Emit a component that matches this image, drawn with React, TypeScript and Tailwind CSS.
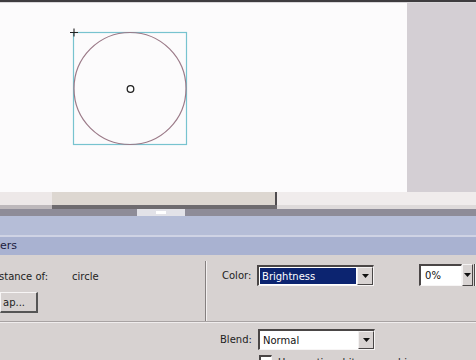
import React from "react";

const font = { fontFamily: '"DejaVu Sans", "Liberation Sans", sans-serif' };

function Arrow({ w = 16 }: { w?: number }) {
  return (
    <div
      className="flex h-full items-center justify-center border-l border-t border-l-[#f4f2f2] border-t-[#f4f2f2] border-r border-b border-r-[#4a4747] border-b-[#4a4747] bg-[#d8d3d2]"
      style={{ width: w }}
    >
      <svg width="7" height="4" viewBox="0 0 7 4">
        <path d="M0 0 L7 0 L3.5 4 Z" fill="#111" />
      </svg>
    </div>
  );
}

function Select({ children, highlight }: { children: React.ReactNode; highlight?: boolean }) {
  return (
    <div className="flex h-[21px] w-[117px] border-t-2 border-l-2 border-t-[#4a4646] border-l-[#4a4646] border-b border-r border-b-[#f7f5f5] border-r-[#f7f5f5] bg-white">
      <div className="flex flex-1 items-center p-[1px]">
        <div
          className={
            highlight
              ? "flex h-full w-full items-center bg-[#0c2470] pl-[2px] text-[10px] text-white"
              : "flex h-full w-full items-center pl-[2px] text-[10px] text-[#111]"
          }
        >
          {children}
        </div>
      </div>
      <Arrow />
    </div>
  );
}

export default function App() {
  return (
    <div className="h-[360px] w-[476px] overflow-hidden bg-[#d7d2d1]" style={font}>
      {/* top dark edge */}
      <div className="h-[2px] bg-[#3e3c3f]" />
      <div className="h-[1px] bg-[#d9d7da]" />
      {/* stage */}
      <div className="flex h-[189px]">
        <div className="w-[407px] bg-[#fcfbfc]">
          <svg width="407" height="189" viewBox="0 3 407 189">
            <rect x="73.5" y="32.5" width="113" height="112" fill="none" stroke="#77c3cf" strokeWidth="1.2" />
            <circle cx="130" cy="88.5" r="56" fill="none" stroke="#9b7a88" strokeWidth="1.2" />
            <circle cx="130.5" cy="89" r="3.3" fill="#fff" stroke="#222" strokeWidth="1.3" />
            <path d="M70 32.5 H78 M74 28.5 V36.5" stroke="#222" strokeWidth="1.1" />
          </svg>
        </div>
        <div className="flex-1 bg-[#d4cfd4]" />
      </div>
      {/* horizontal scrollbar area */}
      <div className="flex h-[13px]">
        <div className="w-[52px] bg-[#ede8e8]" />
        <div className="w-[223px] bg-[#ddd7d1]" />
        <div className="w-[2px] bg-[#4f4c4f]" />
        <div className="flex-1 bg-[#f0ecec]" />
      </div>
      <div className="flex h-[4px]">
        <div className="w-[52px] bg-[#bdb8bb]" />
        <div className="w-[225px] bg-[#6e6b6f]" />
        <div className="flex-1 bg-[#dedada]" />
      </div>
      <div className="flex h-[7px] bg-[#8e8c98]">
        <div className="w-[137px]" />
        <div className="flex w-[48px] items-center justify-center bg-[#e2e2e8]">
          <div className="h-[3px] w-[10px] bg-white" />
        </div>
      </div>
      {/* panel header bands */}
      <div className="h-[19px] bg-[#b5bdd7]" />
      <div className="h-[2px] bg-[#cfd3e4]" />
      <div className="flex h-[18px] items-center bg-[#a9b2d1]">
        <span className="text-[11px] text-[#1c2040]">ers</span>
      </div>
      {/* panel body top row */}
      <div className="flex h-[66px]">
        <div className="flex w-[206px] flex-col pt-[14px]">
          <div className="flex h-[14px] items-center text-[10px] text-[#222]">
            <span className="-ml-[1px] w-[73px]">stance of:</span>
            <span>circle</span>
          </div>
          <div className="mt-[9px] flex h-[21px] w-[38px] items-center border-t border-l border-t-[#f7f5f5] border-l-[#f7f5f5] border-b-2 border-r-2 border-b-[#555] border-r-[#555] pl-[2px] text-[10px] text-[#222]">
            ap...
          </div>
        </div>
        <div className="mt-[6px] w-[1px] bg-[#858080]" />
        <div className="mt-[6px] w-[1px] bg-[#f3f0f0]" />
        <div className="flex flex-1 items-start pt-[10px]">
          <span className="flex h-[21px] w-[50px] items-center pl-[15px] text-[10px] text-[#222]">Color:</span>
          <Select highlight>Brightness</Select>
          <div className="ml-[45px] -mt-[1px] flex h-[22px]">
            <div className="flex w-[43px] items-center border-t-2 border-l-2 border-t-[#4a4646] border-l-[#4a4646] border-b border-r border-b-[#f7f5f5] border-r-[#f7f5f5] bg-white pl-[4px] text-[10px] text-[#111]">
              0%
            </div>
            <Arrow w={11} />
            <div className="ml-[1px] w-[2px] border-l border-[#4a4747] bg-[#f4f2f2]" />
          </div>
        </div>
      </div>
      <div className="h-[1px] bg-[#a8a3a3]" />
      <div className="h-[1px] bg-[#f0eded]" />
      {/* panel body bottom row */}
      <div className="flex pt-[6px]">
        <div className="w-[220px]" />
        <span className="flex h-[21px] w-[38px] items-center text-[10px] text-[#222]">Blend:</span>
        <Select>Normal</Select>
      </div>
      <div className="flex pt-[5px]">
        <div className="ml-[259px] h-[13px] w-[13px] border-t-2 border-l-2 border-t-[#4a4646] border-l-[#4a4646] border-b border-r border-b-[#f7f5f5] border-r-[#f7f5f5] bg-white" />
        <span className="ml-[6px] text-[10px] text-[#222]">Use runtime bitmap caching</span>
      </div>
    </div>
  );
}
